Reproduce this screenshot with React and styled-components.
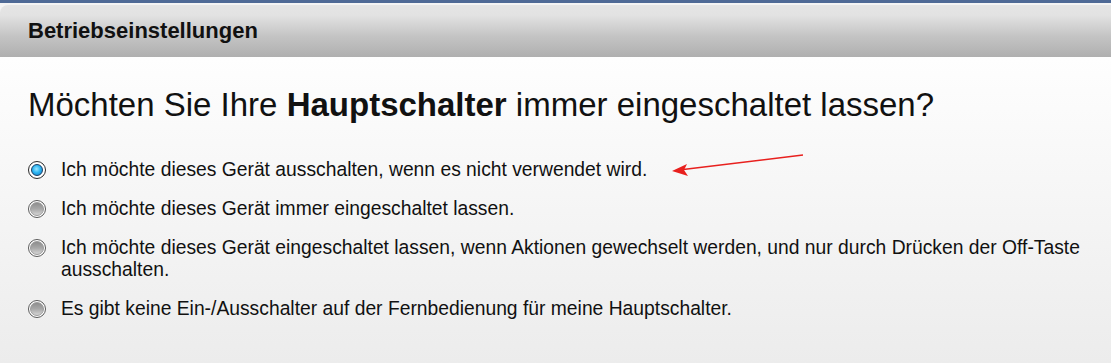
import React from "react";
import styled, { createGlobalStyle } from "styled-components";

const GlobalStyle = createGlobalStyle`
  html, body {
    margin: 0;
    padding: 0;
    background: #ffffff;
  }
  body {
    font-family: "Liberation Sans", Arial, sans-serif;
    color: #111;
  }
`;

const Page = styled.div`
  width: 1111px;
  height: 363px;
  overflow: hidden;
  display: flex;
  flex-direction: column;
  background: #4f6a96;
  padding-top: 3px;
  box-sizing: border-box;
`;

const Frame = styled.div`
  flex: 1;
  display: flex;
  flex-direction: column;
  background: #f4f4f4;
  padding-top: 2px;
`;

const Header = styled.div`
  height: 52px;
  display: flex;
  align-items: center;
  padding-left: 28px;
  border-top-left-radius: 8px;
  background: linear-gradient(to bottom, #e5e5e5 0%, #e2e2e2 20%, #c4c4c4 60%, #afafaf 100%);
  font-size: 22px;
  font-weight: bold;
  color: #111;
`;

const Content = styled.div`
  flex: 1;
  position: relative;
  padding: 29px 28px 0 28px;
  background: linear-gradient(to bottom, #fefefe 0%, #f6f6f6 45%, #ececec 100%);
`;

const Question = styled.h1`
  margin: 0 0 35px 0;
  font-size: 33px;
  font-weight: normal;
  line-height: 38px;
  color: #111;

  b {
    font-weight: bold;
  }
`;

const OptionList = styled.div`
  display: flex;
  flex-direction: column;
  gap: 17px;
`;

const Option = styled.label`
  display: flex;
  align-items: flex-start;
  gap: 15px;
  font-size: 19.3px;
  line-height: 22px;
  color: #111;
`;

const Radio = styled.span`
  flex: none;
  width: 18px;
  height: 18px;
  margin-top: 2px;
  border-radius: 50%;
  box-sizing: border-box;
  border: 1px solid ${(p) => (p.checked ? "#2a2a2a" : "#5a5a5a")};
  background: #ffffff;
  display: flex;
  align-items: center;
  justify-content: center;

  &::after {
    content: "";
    width: ${(p) => (p.checked ? "12px" : "14px")};
    height: ${(p) => (p.checked ? "12px" : "14px")};
    border-radius: 50%;
    box-sizing: border-box;
    border: 1px solid ${(p) => (p.checked ? "#1b3f66" : "#9a9a9a")};
    background: ${(p) =>
      p.checked
        ? "radial-gradient(circle at 45% 40%, #9be6ff 0%, #2eb6f2 45%, #0b77c4 100%)"
        : "linear-gradient(to bottom, #8e8e8e 0%, #a8a8a8 50%, #d4d4d4 100%)"};
  }
`;

const Arrow = styled.svg`
  position: absolute;
  left: 665px;
  top: 97px;
  width: 145px;
  height: 30px;
  overflow: visible;
`;

const options = [
  { text: "Ich möchte dieses Gerät ausschalten, wenn es nicht verwendet wird.", checked: true },
  { text: "Ich möchte dieses Gerät immer eingeschaltet lassen." },
  {
    text: "Ich möchte dieses Gerät eingeschaltet lassen, wenn Aktionen gewechselt werden, und nur durch Drücken der Off-Taste ausschalten.",
  },
  { text: "Es gibt keine Ein-/Ausschalter auf der Fernbedienung für meine Hauptschalter." },
];

export default function App() {
  return (
    <>
      <GlobalStyle />
      <Page>
        <Frame>
          <Header>Betriebseinstellungen</Header>
          <Content>
            <Question>
              Möchten Sie Ihre <b>Hauptschalter</b> immer eingeschaltet lassen?
            </Question>
            <OptionList>
              {options.map((o, i) => (
                <Option key={i}>
                  <Radio checked={o.checked} />
                  <span>{o.text}</span>
                </Option>
              ))}
            </OptionList>
            <Arrow viewBox="0 0 145 30">
              <line x1="138" y1="1" x2="14" y2="16" stroke="#e8201e" strokeWidth="1.6" />
              <polygon points="7,17 22,10 19,16 23,22" fill="#e8201e" />
            </Arrow>
          </Content>
        </Frame>
      </Page>
    </>
  );
}
